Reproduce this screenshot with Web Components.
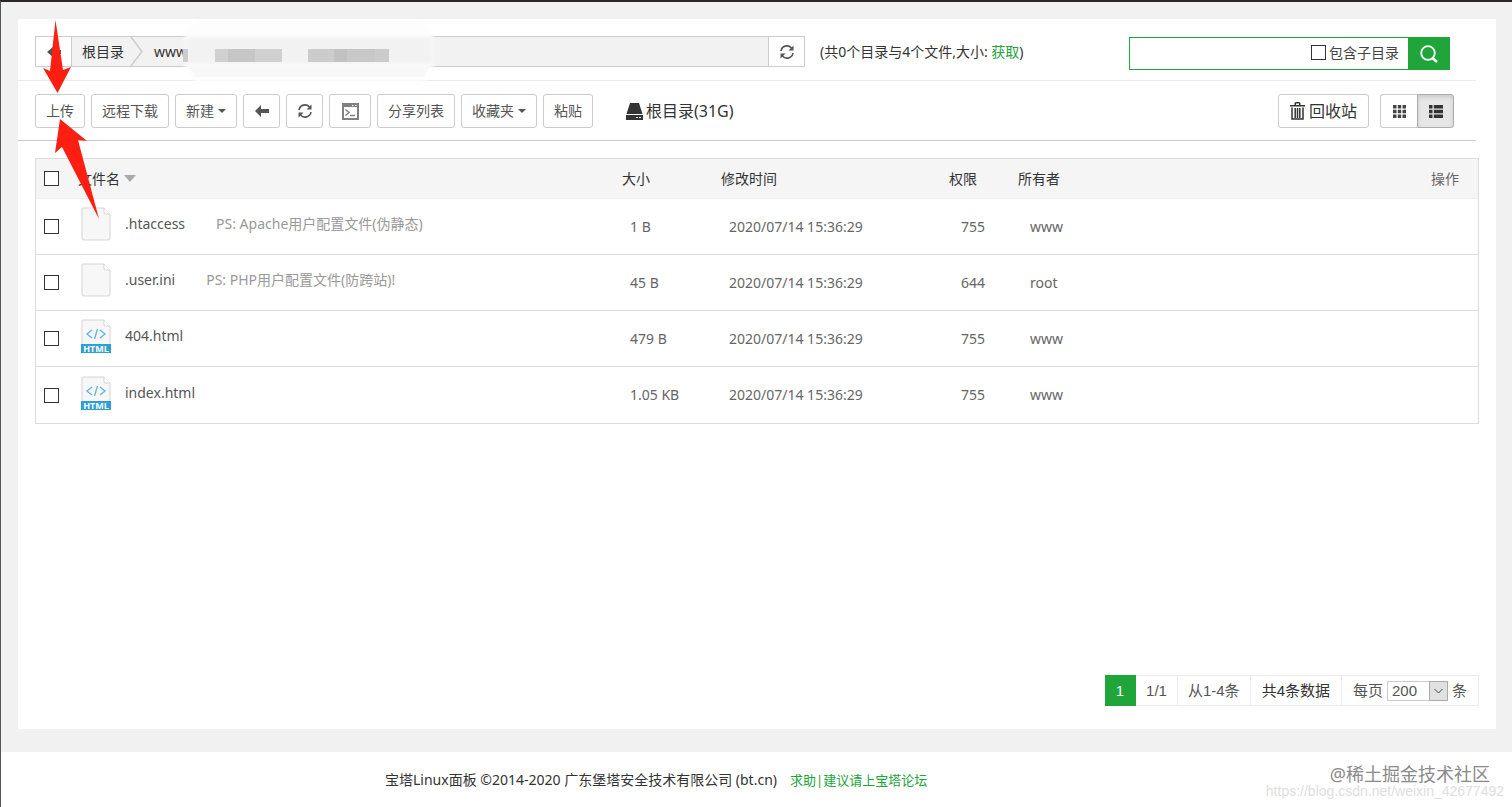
<!DOCTYPE html>
<html lang="zh-CN">
<head>
<meta charset="utf-8">
<title>文件 - 宝塔Linux面板</title>
<style>
	* {
		box-sizing: border-box;
	}

	body {
		margin: 0;
		background: #f1f1f1;
		color: #333;
		font: 14px/20px "Noto Sans", "Noto Sans CJK SC", sans-serif;
	}
</style>
</head>
<body>

<template id="bt-page-template">
	<style>
		:host {
			box-sizing: border-box;
			display: flex;
			flex-direction: column;
			position: relative;
			min-height: 100vh;
			border-top: 2px solid #2a2628;
			border-left: 1px solid #555;
		}

		main {
			flex: 1;
			display: flex;
			flex-direction: column;
			margin: 17px 16px 23px 17px;
			background: #fff;
		}
	</style>
	<main><slot></slot></main>
	<slot name="footer"></slot>
	<slot name="marks"></slot>
</template>

<template id="bt-icon-template">
	<style>
		:host {
			display: inline-flex;
			flex: none;
		}

		svg {
			display: block;
			fill: currentColor;
		}
	</style>
</template>

<template id="bt-bar-template">
	<style>
		:host {
			box-sizing: border-box;
			display: flex;
			align-items: center;
			margin-right: 20px;
			padding: 13px 22px 12px 17px;
			border-bottom: 1px solid #ccc;
		}

		:host([top]) {
			align-items: flex-start;
			padding: 17px 26px 10px 17px;
			border-color: #eaeaea;
		}

		div {
			flex: 1;
			display: flex;
			align-items: center;
			gap: 6px;
		}
	</style>
	<div><slot></slot></div>
	<slot name="end"></slot>
</template>

<template id="bt-path-template">
	<style>
		:host {
			box-sizing: border-box;
			display: flex;
			position: relative;
			flex: 0 1 770px;
			height: 31px;
			margin-right: 9px;
			border: 1px solid #ccc;
			background: #f2f2f2;
		}

		button {
			display: flex;
			align-items: center;
			justify-content: center;
			width: 36px;
			padding: 0;
			border: 0;
			background: #fff;
			color: #555;
		}

		.back {
			border-right: 1px solid #ccc;
		}

		.refresh {
			border-left: 1px solid #ccc;
		}

		nav {
			flex: 1;
			display: flex;
			align-items: center;
			padding-left: 10px;
		}

		a {
			color: #333;
			text-decoration: none;
		}

		nav svg {
			margin: 0 10px 0 6px;
		}

		.mask {
			position: absolute;
			left: 144px;
			top: -17px;
		}
	</style>
	<button class="back" aria-label="后退"><bt-icon name="left"></bt-icon></button>
	<nav>
		<a href="#">根目录</a>
		<svg width="14" height="29" fill="none" stroke="#ccc" stroke-width="1.500"><path d="M1 0L12 14.500L1 29"/></svg>
		<a href="#">www</a>
	</nav>
	<button class="refresh" aria-label="刷新"><bt-icon name="refresh"></bt-icon></button>
	<!-- blurred-out part of the path -->
	<svg class="mask" width="264" height="68" aria-hidden="true">
		<defs><filter id="soft"><feGaussianBlur stdDeviation="2"/></filter></defs>
		<path d="M20 0H240L253 12V48L243 63H16L5 48V12Z" fill="#fdfdfd" filter="url(#soft)"/>
		<path d="M6 17H252V44H6Z" fill="#f2f2f2" filter="url(#soft)"/>
		<path d="M8 46H250L244 57H16Z" fill="#f8f8f8"/>
		<path d="M3 29H8V42H3Z" fill="#ccc"/>
		<path d="M35 29H102V42H35Z" fill="#d0d0d0"/>
		<path d="M48 29H75V42H48Z" fill="#c6c6c6"/>
		<path d="M128 29H209V42H128Z" fill="#ccc"/>
		<path d="M154 29H167V42H154Z" fill="#c2c2c2"/>
		<path d="M167 29H195V42H167Z" fill="#c8c8c8"/>
	</svg>
</template>

<template id="bt-summary-template">
	<style>
		a {
			color: #20a53a;
			text-decoration: none;
		}
	</style>
	<span>(共0个目录与4个文件,大小: <a href="#">获取</a>)</span>
</template>

<template id="bt-search-template">
	<style>
		:host {
			display: flex;
			box-sizing: border-box;
			width: 321px;
			height: 33px;
			margin-top: 1px;
		}

		div {
			flex: 1;
			display: flex;
			align-items: center;
			min-width: 0;
			padding: 0 9px 2px 0;
			border: 1px solid #20a53a;
			border-right: 0;
		}

		input[type=text] {
			flex: 1;
			min-width: 0;
			height: 28px;
			border: 0;
			outline: 0;
			font: inherit;
		}

		label {
			display: flex;
			align-items: center;
			gap: 3px;
			color: #444;
		}

		input[type=checkbox] {
			appearance: none;
			width: 15px;
			height: 15px;
			margin: 0;
			border: 1px solid #333;
			background: #fff;
		}

		button {
			display: flex;
			align-items: center;
			justify-content: center;
			width: 42px;
			padding: 0;
			border: 0;
			background: #20a53a;
			color: #fff;
		}
	</style>
	<div>
		<input type="text" aria-label="搜索">
		<label><input type="checkbox">包含子目录</label>
	</div>
	<button aria-label="搜索"><bt-icon name="search"></bt-icon></button>
</template>

<template id="bt-button-template">
	<style>
		:host {
			display: block;
		}

		button {
			display: flex;
			align-items: center;
			justify-content: center;
			gap: 4px;
			box-sizing: border-box;
			height: 34px;
			padding: 0 10px;
			border: 1px solid #ccc;
			border-radius: 3px;
			background: #fff;
			color: #555;
			font: inherit;
			white-space: nowrap;
		}

		:host([icon]) button {
			width: 37px;
			padding: 0;
		}

		:host([icon=terminal]) button {
			width: 42px;
		}

		:host([large]) button {
			padding: 0 11px;
			color: #333;
			font-size: 16px;
		}
	</style>
	<button><slot></slot></button>
</template>

<template id="bt-disk-template">
	<style>
		:host {
			display: flex;
			align-items: center;
			gap: 3px;
			margin-left: 27px;
			font-size: 16px;
		}
	</style>
	<bt-icon name="disk"></bt-icon>
	<span><slot></slot></span>
</template>

<template id="bt-views-template">
	<style>
		:host {
			display: flex;
			margin-left: 11px;
		}

		button {
			display: flex;
			align-items: center;
			justify-content: center;
			width: 37px;
			height: 34px;
			padding: 0;
			border: 1px solid #ccc;
			border-right: 0;
			border-radius: 3px 0 0 3px;
			background: #fff;
			color: #444;
		}

		.active {
			border: 1px solid #adadad;
			border-radius: 0 3px 3px 0;
			background: #e6e6e6;
			box-shadow: inset 0 2px 4px rgba(0, 0, 0, .12);
			color: #333;
		}
	</style>
	<button aria-label="图标"><bt-icon name="grid"></bt-icon></button>
	<button class="active" aria-label="列表"><bt-icon name="list"></bt-icon></button>
</template>

<template id="bt-files-template">
	<style>
		:host {
			display: block;
			flex: 1;
			margin: 17px 17px 0;
		}

		table {
			width: 100%;
			table-layout: fixed;
			border: 1px solid #ddd;
			border-spacing: 0;
		}

		th {
			height: 40px;
			padding: 0 8px;
			background: #f5f5f5;
			border-bottom: 1px solid #eee;
			box-sizing: border-box;
			font-weight: 400;
			text-align: left;
		}

		td {
			box-sizing: border-box;
			height: 56px;
			padding: 0 16px;
			border-bottom: 1px solid #ddd;
			color: #666;
		}

		tr:last-child td {
			border-bottom: 0;
		}

		.check {
			width: 35px;
			padding: 0 0 0 8px;
		}

		.name {
			width: 543px;
		}

		.size {
			width: 99px;
		}

		.time {
			width: 228px;
		}

		.perm {
			width: 69px;
		}

		td.perm,
		td.owner {
			padding: 0 0 0 20px;
		}

		th.name {
			padding-left: 7px;
		}

		th.ops {
			padding-right: 19px;
			color: #666;
			text-align: right;
		}

		input {
			appearance: none;
			display: block;
			width: 15px;
			height: 15px;
			margin: 0;
			border: 1px solid #333;
			background: #fff;
		}

		th svg {
			vertical-align: 2px;
		}

		td.name {
			padding: 0 0 5px 10px;
		}

		.file {
			display: flex;
			align-items: center;
			gap: 14px;
			color: #555;
		}

		.note {
			margin-left: 17px;
			color: #999;
		}
	</style>
	<table>
		<thead>
			<tr>
				<th class="check"><input type="checkbox" aria-label="全选"></th>
				<th class="name">文件名 <svg width="12" height="7"><path d="M0 0H12L6 7Z" fill="#aaa"/></svg></th>
				<th class="size">大小</th>
				<th class="time">修改时间</th>
				<th class="perm">权限</th>
				<th class="owner">所有者</th>
				<th class="ops">操作</th>
			</tr>
		</thead>
		<tbody></tbody>
	</table>
</template>

<template id="bt-file-icon-template">
	<style>
		:host {
			display: block;
			flex: none;
			width: 30px;
			height: 34px;
		}

		svg {
			display: block;
			overflow: visible;
		}

		text {
			font: 700 9px "Open Sans", sans-serif;
		}
	</style>
	<svg width="30" height="34">
		<path d="M2 1H23L29 7V31Q29 33 27 33H3Q1 33 1 31V2Q1 1 2 1Z" fill="#f7f7f7" stroke="#d5d5d5"/>
		<path d="M23 1V6Q23 7 24 7H29" fill="#fff" stroke="#d5d5d5"/>
		<g>
			<path d="M11 11L6 15L11 19M19 11L24 15L19 19M16.500 10L13.500 20" fill="none" stroke="#5cb5e0" stroke-width="1.300"/>
			<path d="M0 25H30V34H0Z" fill="#2d9fd4"/>
			<text x="15" y="33" text-anchor="middle" fill="#fff">HTML</text>
		</g>
	</svg>
</template>

<template id="bt-pager-template">
	<style>
		:host {
			display: flex;
			justify-content: flex-end;
			margin: 0 17px 23px;
			color: #555;
			font: 15px/29px "Liberation Sans", "Noto Sans CJK SC", sans-serif;
		}

		span,
		label {
			padding: 0 10px;
			border: 1px solid #ececec;
			border-left-width: 0;
		}

		.current {
			padding: 0 11px;
			border-color: #20a53a;
			background: #20a53a;
			color: #fff;
		}

		.total {
			padding: 0 11px;
			color: #333;
		}

		label {
			display: flex;
			align-items: center;
			gap: 4px;
			padding: 0 11px;
		}

		div {
			position: relative;
			display: flex;
		}

		select {
			appearance: none;
			width: 61px;
			height: 20px;
			padding: 0 4px;
			border: 1px solid #ccc;
			border-radius: 0;
			background: #fff;
			color: #555;
			font: inherit;
			line-height: 18px;
		}

		svg {
			position: absolute;
			right: 0;
			top: 0;
			pointer-events: none;
		}
	</style>
	<span class="current">1</span>
	<span>1/1</span>
	<span>从1-4条</span>
	<span class="total">共4条数据</span>
	<label>每页
		<div>
			<select><option>200</option></select>
			<svg width="19" height="20"><path d="M.500 .500H18.500V19.500H.500Z" fill="#e1e1e1" stroke="#aaa"/><path d="M5.500 8L9.500 12L13.500 8" fill="none" stroke="#444"/></svg>
		</div>
		条
	</label>
</template>

<template id="bt-footer-template">
	<style>
		:host {
			box-sizing: border-box;
			display: flex;
			align-items: center;
			gap: 13px;
			min-height: 55px;
			padding-left: 384px;
			background: #fff;
		}

		a {
			color: #20a53a;
			font-size: 13px;
			text-decoration: none;
		}
	</style>
	<span><slot></slot></span>
	<a href="#">求助|建议请上宝塔论坛</a>
</template>

<template id="bt-marks-template">
	<style>
		:host {
			position: absolute;
			inset: 0;
			pointer-events: none;
		}

		svg {
			position: absolute;
			left: 0;
			top: 0;
		}

		.community,
		.blog {
			position: absolute;
			right: 22px;
			bottom: 20px;
			color: #8a8a8a;
			font-size: 18px;
			line-height: 26px;
		}

		.blog {
			right: 8px;
			bottom: 7px;
			color: #dedede;
			font: 14px/18px "Liberation Sans", sans-serif;
		}
	</style>
	<svg width="120" height="230" fill="#ff1f12">
		<path d="M54.500 18L62 68L70 65L56.500 91L42 66L49 69Z"/>
		<path d="M59 117L86 139L77 138L98 217L61 145L54 151Z"/>
	</svg>
	<span class="blog">https://blog.csdn.net/weixin_42677492</span>
	<span class="community">@稀土掘金技术社区</span>
</template>

<bt-page>
	<bt-bar top>
		<bt-path></bt-path>
		<bt-summary></bt-summary>
		<bt-search slot="end"></bt-search>
	</bt-bar>
	<bt-bar>
		<bt-button>上传</bt-button>
		<bt-button>远程下载</bt-button>
		<bt-button>新建<bt-icon name="caret"></bt-icon></bt-button>
		<bt-button icon="arrow" label="返回上级"><bt-icon name="arrow"></bt-icon></bt-button>
		<bt-button icon="refresh" label="刷新"><bt-icon name="refresh"></bt-icon></bt-button>
		<bt-button icon="terminal" label="终端"><bt-icon name="terminal"></bt-icon></bt-button>
		<bt-button>分享列表</bt-button>
		<bt-button>收藏夹<bt-icon name="caret"></bt-icon></bt-button>
		<bt-button>粘贴</bt-button>
		<bt-disk>根目录(31G)</bt-disk>
		<bt-button slot="end" large><bt-icon name="trash"></bt-icon>回收站</bt-button>
		<bt-views slot="end"></bt-views>
	</bt-bar>
	<bt-files></bt-files>
	<bt-pager></bt-pager>
	<bt-footer slot="footer">宝塔Linux面板 ©2014-2020 广东堡塔安全技术有限公司 (bt.cn)</bt-footer>
	<bt-marks slot="marks"></bt-marks>
</bt-page>

<script>
	const icons = {
		left: [14, 12, '<path d="M0 6L7 0V4H14V8H7V12Z"/>'],
		caret: [8, 4, '<path d="M0 0H8L4 4Z"/>'],
		arrow: [14, 12, '<path d="M0 6L6 0V4H14V8H6V12Z"/>'],
		refresh: [14, 14, '<path d="M1 6A6 6 0 0 1 11.500 3M13 8A6 6 0 0 1 2.500 11" fill="none" stroke="currentColor" stroke-width="1.600"/><path d="M13.500 .500V5.500H8.500ZM.500 13.500V8.500H5.500Z"/>'],
		terminal: [17, 17, '<path d="M1 1H16V16H1Z" fill="none" stroke="#808080" stroke-width="2"/><path d="M1 1H16V4H1Z" fill="#808080"/><path d="M3.500 6.500L7 9.500L3.500 12.500M8 12.500H13" fill="none" stroke="#808080" stroke-width="1.500"/><path d="M10 2H11.500V3H10ZM13 2H14.500V3H13Z" fill="#fff"/>'],
		disk: [17, 17, '<path d="M4 0H13L16.500 11H.500Z"/><path d="M0 12H17V17H0ZM10 14V15H12V14ZM13 14V15H15V14Z" fill-rule="evenodd"/>'],
		trash: [15, 18, '<path d="M0 3H4.500V1.500Q4.500 0 6 0H9Q10.500 0 10.500 1.500V3H15V4.500H0ZM6 3H9V1.500H6Z" fill-rule="evenodd"/><path d="M2 5.500V17H13V5.500M5.200 6V16M7.500 6V16M9.800 6V16" fill="none" stroke="currentColor" stroke-width="1.500"/>'],
		grid: [13, 13, '<path d="M0 0H3.500V3.500H0ZM4.800 0H8.200V3.500H4.800ZM9.500 0H13V3.500H9.500ZM0 4.800H3.500V8.200H0ZM4.800 4.800H8.200V8.200H4.800ZM9.500 4.800H13V8.200H9.500ZM0 9.500H3.500V13H0ZM4.800 9.500H8.200V13H4.800ZM9.500 9.500H13V13H9.500Z"/>'],
		list: [14, 13, '<path d="M0 0H3.500V3.500H0ZM4.800 0H14V3.500H4.800ZM0 4.800H3.500V8.200H0ZM4.800 4.800H14V8.200H4.800ZM0 9.500H3.500V13H0ZM4.800 9.500H14V13H4.800Z"/>'],
		search: [18, 18, '<circle cx="8" cy="8" r="6.800" fill="none" stroke="currentColor" stroke-width="1.800"/><path d="M12.500 13L17 17" fill="none" stroke="currentColor" stroke-width="2.400"/>']
	};

	const files = [
		{name: '.htaccess', note: 'PS: Apache用户配置文件(伪静态)', size: '1 B', time: '2020/07/14 15:36:29', perm: '755', owner: 'www'},
		{name: '.user.ini', note: 'PS: PHP用户配置文件(防跨站)!', size: '45 B', time: '2020/07/14 15:36:29', perm: '644', owner: 'root'},
		{name: '404.html', type: 'html', size: '479 B', time: '2020/07/14 15:36:29', perm: '755', owner: 'www'},
		{name: 'index.html', type: 'html', size: '1.05 KB', time: '2020/07/14 15:36:29', perm: '755', owner: 'www'}
	];

	// Clones the template named after the element into its shadow root
	class BtElement extends HTMLElement {
		constructor() {
			super();
			const template = document.querySelector('#' + this.localName + '-template');
			this.attachShadow({mode: 'open'}).appendChild(template.content.cloneNode(true));
		}
	}

	class BtIcon extends BtElement {
		connectedCallback() {
			if (this.shadowRoot.querySelector('svg')) {
				return;
			}
			const [width, height, shape] = icons[this.getAttribute('name')];
			this.shadowRoot.innerHTML += `<svg width="${width}" height="${height}" viewBox="0 0 ${width} ${height}" aria-hidden="true">${shape}</svg>`;
		}
	}

	class BtButton extends BtElement {
		connectedCallback() {
			if (this.hasAttribute('label')) {
				this.shadowRoot.querySelector('button').setAttribute('aria-label', this.getAttribute('label'));
			}
		}
	}

	// Plain sheet of paper, with the HTML badge only for html files
	class BtFileIcon extends BtElement {
		connectedCallback() {
			const badge = this.shadowRoot.querySelector('g');
			if (badge && this.getAttribute('type') !== 'html') {
				badge.remove();
			}
		}
	}

	class BtFiles extends BtElement {
		connectedCallback() {
			this.shadowRoot.querySelector('tbody').innerHTML = files.map(file => this.row(file)).join('');
		}

		row(file) {
			return `<tr>
				<td class="check"><input type="checkbox" aria-label="${file.name}"></td>
				<td class="name"><div class="file">
					<bt-file-icon type="${file.type || 'file'}"></bt-file-icon>
					<span>${file.name}</span>
					${file.note ? `<span class="note">${file.note}</span>` : ''}
				</div></td>
				<td>${file.size}</td>
				<td>${file.time}</td>
				<td class="perm">${file.perm}</td>
				<td class="owner">${file.owner}</td>
				<td></td>
			</tr>`;
		}
	}

	customElements.define('bt-icon', BtIcon);
	customElements.define('bt-button', BtButton);
	customElements.define('bt-file-icon', BtFileIcon);
	customElements.define('bt-files', BtFiles);
	customElements.define('bt-path', class extends BtElement {});
	customElements.define('bt-summary', class extends BtElement {});
	customElements.define('bt-search', class extends BtElement {});
	customElements.define('bt-disk', class extends BtElement {});
	customElements.define('bt-views', class extends BtElement {});
	customElements.define('bt-bar', class extends BtElement {});
	customElements.define('bt-pager', class extends BtElement {});
	customElements.define('bt-footer', class extends BtElement {});
	customElements.define('bt-marks', class extends BtElement {});
	customElements.define('bt-page', class extends BtElement {});
</script>
</body>
</html>
